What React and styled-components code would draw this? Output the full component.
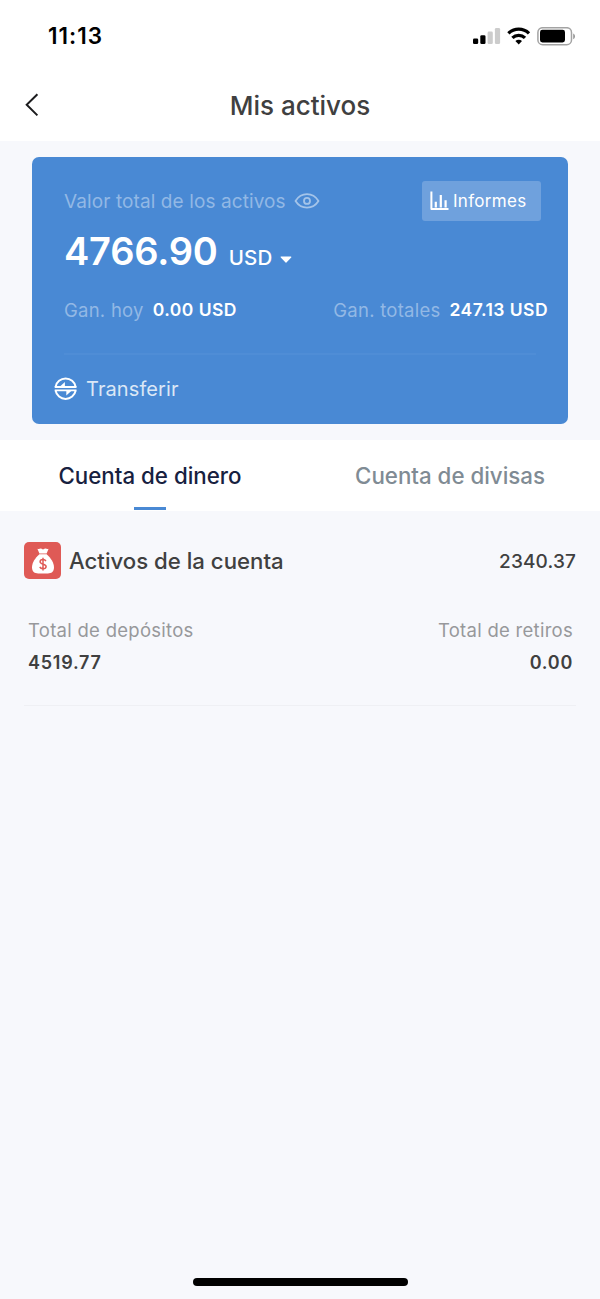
import React from 'react'
import styled, { createGlobalStyle } from 'styled-components'

const GlobalStyle = createGlobalStyle`
  * {
    box-sizing: border-box;
  }

  body {
    margin: 0;
    background: #f7f8fc;
    font-family: Inter, 'Liberation Sans', sans-serif;
    color: #404040;
  }
`

const SignalIcon = () =>
  <svg width="28" height="18" viewBox="0 0 28 18">
    <rect x="0" y="11.5" width="5.2" height="5.5" rx="1.3" fill="#000" />
    <rect x="7.3" y="8.2" width="5.2" height="8.8" rx="1.3" fill="#000" />
    <rect x="14.6" y="4.6" width="5.2" height="12.4" rx="1.3" fill="#ccc" />
    <rect x="21.9" y="1" width="5.2" height="16" rx="1.3" fill="#ccc" />
  </svg>

const WifiIcon = () =>
  <svg width="24" height="18" viewBox="0 0 24 18" fill="none" stroke="#000" strokeWidth="3.3">
    <path d="M1.4 6.4C7.2 0.8 16.2 0.8 22 6.4" />
    <path d="M5.4 10.9C8.9 7.5 14.5 7.5 18 10.9" />
    <path d="M11.7 17.4l-3.3-3.4c1.9-1.6 4.7-1.6 6.6 0z" fill="#000" stroke="none" />
  </svg>

const BatteryIcon = () =>
  <svg width="39" height="19" viewBox="0 0 39 19">
    <rect x="0.9" y="0.7" width="33.6" height="17" rx="4.8" fill="none" stroke="#a3a3a3" strokeWidth="1.5" />
    <rect x="3" y="2.8" width="25" height="12.6" rx="2.4" fill="#000" />
    <path d="M36.2 6.4c2.4 1 2.4 4.8 0 5.8z" fill="#999" />
  </svg>

const BackIcon = () =>
  <svg width="14" height="24" viewBox="0 0 14 24" fill="none" stroke="#1c1c1e" strokeWidth="2">
    <path d="M12.4 1.2L1.7 11.8l10.7 10.6" />
  </svg>

const EyeIcon = () =>
  <svg width="26" height="16" viewBox="0 0 26 16" fill="none" stroke="#a4c4e9" strokeWidth="1.8">
    <path d="M1.5 8C4.2 3.8 8.2 1.2 13 1.2S21.8 3.8 24.5 8C21.8 12.2 17.8 14.6 13 14.6S4.2 12.2 1.5 8z" strokeLinejoin="round" />
    <circle cx="13" cy="7.9" r="3" />
  </svg>

const ChartIcon = () =>
  <svg width="19" height="20" viewBox="0 0 19 20" fill="none" stroke="#fff" strokeWidth="2">
    <path d="M1.4 0.5V18.1H18.5" strokeLinejoin="round" />
    <path d="M5.8 10.8V16.4M10.8 4V16.4M15.6 9.3V16.4" strokeWidth="2.2" />
  </svg>

const CaretIcon = () =>
  <svg width="12" height="9" viewBox="0 0 12 9">
    <path d="M1.2 1h9.6L6 6z" fill="#fff" stroke="#fff" strokeWidth="1.2" strokeLinejoin="round" />
  </svg>

const TransferIcon = () =>
  <svg width="24" height="24" viewBox="0 0 24 24" fill="none" stroke="#fff" strokeWidth="2">
    <path d="M1.6 9.8C2.4 4.9 6.7 1.5 11.6 1.5s9.2 3.4 10 8.3" />
    <path d="M1.6 13.6C2.4 18.5 6.7 21.9 11.6 21.9s9.2-3.4 10-8.3" />
    <path d="M0.7 10H22.5M0.7 13.4H22.5" strokeWidth="1.8" />
    <path d="M5.4 10L10.9 5V10z" fill="#fff" stroke="none" />
    <path d="M17.8 13.4L12.3 18.4V13.4z" fill="#fff" stroke="none" />
  </svg>

const MoneyBagIcon = () =>
  <svg width="24" height="28" viewBox="0 0 24 28">
    <path
      d="M6.4 1.700C8 2.600 8.900 1.300 10 1.500c.9.200 1.200 1 2 1s1.200-.8 2.100-1c1.200-.2 2 .9 3.500.2L15.600 6.500H8.400z"
      fill="#fff"
    />
    <path
      d="M8.400 7.200h7.200C20 11 23 16 23 20.300c0 4.400-2.500 6.200-6.200 6.200H7.200C3.500 26.500 1 24.700 1 20.300 1 16 4 11 8.400 7.200z"
      fill="#fff"
    />
    <path
      d="M14.900 14.200c-.5-1-1.500-1.600-2.900-1.600-1.700 0-2.900.9-2.900 2.200 0 3.200 6 1.500 6 4.700 0 1.400-1.300 2.300-3.100 2.300-1.600 0-2.700-.7-3.200-1.900M12 10.800v12.800"
      fill="none"
      stroke="#df5a56"
      strokeWidth="1.5"
    />
  </svg>

const App = () =>
  <S.Screen>
    <GlobalStyle />

    <S.StatusBar>
      <S.Time>11:13</S.Time>
      <S.StatusIcons>
        <SignalIcon />
        <WifiIcon />
        <BatteryIcon />
      </S.StatusIcons>
    </S.StatusBar>

    <S.NavBar>
      <S.Back aria-label="Volver"><BackIcon /></S.Back>
      <S.Title>Mis activos</S.Title>
    </S.NavBar>

    <S.Card>
      <S.CardHeader>
        <S.CardLabel>Valor total de los activos</S.CardLabel>
        <EyeIcon />
        <S.Reports>
          <ChartIcon />
          Informes
        </S.Reports>
      </S.CardHeader>

      <S.Balance>
        <S.Amount>4766.90</S.Amount>
        <S.Currency>USD</S.Currency>
        <CaretIcon />
      </S.Balance>

      <S.Earnings>
        <S.Earning>
          <S.EarningLabel>Gan. hoy</S.EarningLabel>
          <S.EarningValue>0.00 USD</S.EarningValue>
        </S.Earning>
        <S.Earning>
          <S.EarningLabel>Gan. totales</S.EarningLabel>
          <S.EarningValue>247.13 USD</S.EarningValue>
        </S.Earning>
      </S.Earnings>

      <S.Transfer>
        <TransferIcon />
        Transferir
      </S.Transfer>
    </S.Card>

    <S.Tabs>
      <S.Tab $active>Cuenta de dinero</S.Tab>
      <S.Tab>Cuenta de divisas</S.Tab>
    </S.Tabs>

    <S.Account>
      <S.AccountHeader>
        <S.Badge><MoneyBagIcon /></S.Badge>
        <S.AccountName>Activos de la cuenta</S.AccountName>
        <S.AccountTotal>2340.37</S.AccountTotal>
      </S.AccountHeader>
      <S.Totals>
        <S.Total>
          <S.TotalLabel>Total de depósitos</S.TotalLabel>
          <S.TotalValue>4519.77</S.TotalValue>
        </S.Total>
        <S.Total $end>
          <S.TotalLabel>Total de retiros</S.TotalLabel>
          <S.TotalValue>0.00</S.TotalValue>
        </S.Total>
      </S.Totals>
    </S.Account>

    <S.HomeIndicator />
  </S.Screen>

const S = {
  Screen: styled.main`
    display: flex;
    flex-direction: column;
    width: 600px;
    height: 1299px;
    overflow: hidden;
    background: #f7f8fc;
    white-space: nowrap;
  `,
  StatusBar: styled.header`
    display: flex;
    justify-content: space-between;
    height: 70px;
    padding: 22px 24px 0 48px;
    background: #fff;
  `,
  Time: styled.div`
    font-size: 22.5px;
    font-weight: 600;
    line-height: 28px;
    letter-spacing: 1px;
    color: #000;
  `,
  StatusIcons: styled.div`
    display: flex;
    align-items: center;
    gap: 6px;
    height: 28px;
  `,
  NavBar: styled.nav`
    display: grid;
    grid-template-columns: 60px 1fr 60px;
    align-items: center;
    height: 71px;
    background: #fff;
  `,
  Back: styled.button`
    display: flex;
    padding: 0 0 2px 24.5px;
    border: 0;
    background: none;
  `,
  Title: styled.h1`
    margin: 0;
    font-size: 26px;
    font-weight: 550;
    line-height: 32px;
    text-align: center;
  `,
  Card: styled.section`
    height: 267px;
    margin: 16px 32px;
    border-radius: 7px;
    background: #4989d4;
    color: #fff;
  `,
  CardHeader: styled.div`
    display: flex;
    align-items: center;
    height: 40px;
    margin: 24px 27px 0 32px;
    gap: 8px;
  `,
  CardLabel: styled.span`
    font-size: 19px;
    letter-spacing: 0.1px;
    color: #92b8e5;
  `,
  Reports: styled.button`
    display: flex;
    align-items: center;
    gap: 4px;
    width: 119px;
    height: 40px;
    margin-left: auto;
    padding: 0 0 0 8px;
    border: 0;
    border-radius: 3px;
    background: #6fa1dd;
    font: 400 17px Inter, sans-serif;
    letter-spacing: 0.3px;
    color: #fff;
  `,
  Balance: styled.div`
    display: flex;
    align-items: baseline;
    height: 62px;
    padding: 6px 0 0 32px;
  `,
  Amount: styled.strong`
    font-size: 38px;
    font-weight: 600;
    line-height: 48px;
    letter-spacing: -0.2px;
  `,
  Currency: styled.span`
    margin: 0 7px 0 11px;
    font-size: 20.5px;
    font-weight: 500;
    letter-spacing: 0.2px;
  `,
  Earnings: styled.div`
    display: flex;
    justify-content: space-between;
    height: 72px;
    margin: 0 32px;
    padding-top: 15px;
    border-bottom: 2px solid #4f8dd6;
  `,
  Earning: styled.div`
    display: flex;
    gap: 9px;
    margin-right: -12px;
    line-height: 24px;
  `,
  EarningLabel: styled.span`
    font-size: 18.5px;
    letter-spacing: 0.25px;
    color: #92b8e5;
  `,
  EarningValue: styled.span`
    font-size: 17.5px;
    font-weight: 600;
    letter-spacing: 0.45px;
  `,
  Transfer: styled.div`
    display: flex;
    align-items: center;
    gap: 8px;
    height: 68px;
    padding-left: 22px;
    font-size: 20px;
    letter-spacing: 0.1px;
    color: #dbe7f6;
  `,
  Tabs: styled.nav`
    display: grid;
    grid-template-columns: 1fr 1fr;
    height: 71px;
    background: #fff;
  `,
  Tab: styled.div`
    display: flex;
    flex-direction: column;
    align-items: center;
    justify-content: space-between;
    padding-top: 20px;
    font-size: 22.3px;
    font-weight: 550;
    line-height: 31px;
    color: ${({ $active }) => $active ? '#17213f' : '#808b94'};

    &::after {
      content: '';
      width: 32px;
      height: 3px;
      margin-bottom: 1px;
      background: ${({ $active }) => $active ? '#4989d4' : 'transparent'};
    }
  `,
  Account: styled.section`
    height: 195px;
    margin: 0 24px;
    padding-top: 31px;
    border-bottom: 1px solid #eff0f4;
  `,
  AccountHeader: styled.div`
    display: flex;
    align-items: center;
    height: 37px;
  `,
  Badge: styled.div`
    display: flex;
    align-items: center;
    justify-content: center;
    width: 37px;
    height: 37px;
    border-radius: 5px;
    background: #df5a56;
  `,
  AccountName: styled.h2`
    margin: 0 0 0 8px;
    font-size: 22.2px;
    font-weight: 550;
  `,
  AccountTotal: styled.span`
    margin-left: auto;
    padding-top: 1px;
    font-size: 19px;
    font-weight: 500;
    letter-spacing: 0.15px;
  `,
  Totals: styled.div`
    display: flex;
    justify-content: space-between;
    margin-top: 36px;
    padding: 0 3px 0 4px;
  `,
  Total: styled.div`
    display: flex;
    flex-direction: column;
    align-items: ${({ $end }) => $end ? 'flex-end' : 'flex-start'};
    line-height: 31.5px;
  `,
  TotalLabel: styled.span`
    font-size: 18.5px;
    letter-spacing: 0.28px;
    color: #97989b;
  `,
  TotalValue: styled.span`
    font-size: 18px;
    font-weight: 600;
    letter-spacing: 0.75px;
  `,
  HomeIndicator: styled.div`
    width: 215px;
    height: 8px;
    margin: auto auto 13px;
    border-radius: 4px;
    background: #000;
  `
}

export default App
